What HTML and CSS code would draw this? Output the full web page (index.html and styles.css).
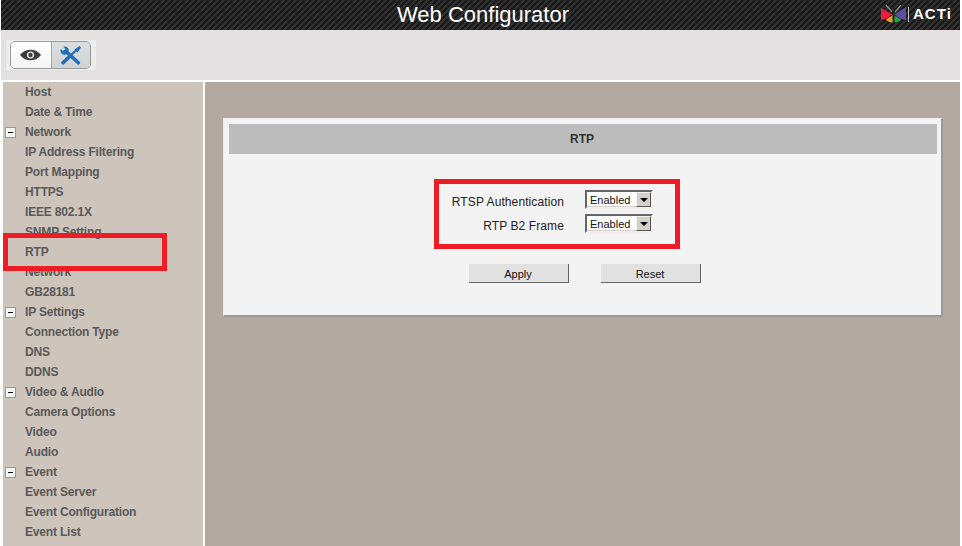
FILE: index.html
```html
<!DOCTYPE html>
<html lang="en">
<head>
<meta charset="utf-8">
<title>Web Configurator</title>
<link rel="stylesheet" href="styles.css">
</head>
<body>
<div class="page">
  <header class="topbar">
    <h1 class="title">Web Configurator</h1>
    <div class="logo">
      <svg class="logo-mark" width="25" height="18" viewBox="0 0 25 18">
        <path d="M5 0 L11 7 M20 0 L14 7" stroke="#8a8a8a" stroke-width="1.3" fill="none"/>
        <path d="M0 3 L11.5 9.5 L5 14 L0 15 Z" fill="#ee1c3a"/>
        <path d="M25 2 L13.5 9.5 L20 14 L25 15 Z" fill="#5b4ea3"/>
        <path d="M5 14.5 L11.5 10.5 L11.5 17.5 Q7 17.5 5 14.5 Z" fill="#f39a1f"/>
        <path d="M20 14.5 L13.5 10.5 L13.5 17.5 Q18 17.5 20 14.5 Z" fill="#1fa04a"/>
      </svg>
      <span class="logo-sep"></span>
      <span class="logo-text">ACTi</span>
    </div>
  </header>
  <div class="toolbar">
    <div class="switch-wrap">
      <div class="switch">
        <button class="switch-btn" type="button" aria-label="View">
          <svg width="21" height="12" viewBox="0 0 21 12">
            <path d="M0 6 C5 -1 16 -1 21 6 C16 13 5 13 0 6 Z" fill="#3c3c3c"/>
            <circle cx="10.5" cy="6" r="3.6" fill="#e8e8e8"/>
            <circle cx="10.5" cy="6" r="2.2" fill="#3c3c3c"/>
          </svg>
        </button>
        <button class="switch-btn is-active" type="button" aria-label="Settings">
          <svg width="21" height="19" viewBox="0 0 21 19">
            <path d="M5 4.5 L18.3 16.8" stroke="#1e6fbd" stroke-width="3.6" stroke-linecap="round" fill="none"/>
            <circle cx="4.6" cy="4.6" r="4.2" fill="#1e6fbd"/>
            <path d="M2.6 -.5 L5.4 3 L3.2 5 L-.5 2.2 L-.5 -.5 Z" fill="#d8dadc"/>
            <path d="M17.5 3 L8 12" stroke="#1e6fbd" stroke-width="2.4" fill="none"/>
            <path d="M8.6 11.5 L3 16.8" stroke="#1e6fbd" stroke-width="3.6" stroke-linecap="round" fill="none"/>
            <path d="M14.5 3.5 L19.5 0 L21 1.5 L17.5 6.5 Z" fill="#1e6fbd"/>
          </svg>
        </button>
      </div>
    </div>
  </div>
  <div class="content">
    <nav class="sidebar">
      <div class="nav-item">Host</div>
      <div class="nav-item">Date &amp; Time</div>
      <div class="nav-item has-toggle"><span class="toggle"></span>Network</div>
      <div class="nav-item">IP Address Filtering</div>
      <div class="nav-item">Port Mapping</div>
      <div class="nav-item">HTTPS</div>
      <div class="nav-item">IEEE 802.1X</div>
      <div class="nav-item">SNMP Setting</div>
      <div class="nav-item">RTP</div>
      <div class="nav-item">Network</div>
      <div class="nav-item">GB28181</div>
      <div class="nav-item has-toggle"><span class="toggle"></span>IP Settings</div>
      <div class="nav-item">Connection Type</div>
      <div class="nav-item">DNS</div>
      <div class="nav-item">DDNS</div>
      <div class="nav-item has-toggle"><span class="toggle"></span>Video &amp; Audio</div>
      <div class="nav-item">Camera Options</div>
      <div class="nav-item">Video</div>
      <div class="nav-item">Audio</div>
      <div class="nav-item has-toggle"><span class="toggle"></span>Event</div>
      <div class="nav-item">Event Server</div>
      <div class="nav-item">Event Configuration</div>
      <div class="nav-item">Event List</div>
      <div class="nav-highlight"></div>
    </nav>
    <main class="main">
      <section class="panel">
        <h2 class="panel-head">RTP</h2>
        <div class="form">
          <div class="fields">
            <div class="field">
              <span class="field-label">RTSP Authentication</span>
              <span class="select"><span class="select-value">Enabled</span><span class="select-arrow"></span></span>
            </div>
            <div class="field">
              <span class="field-label">RTP B2 Frame</span>
              <span class="select"><span class="select-value">Enabled</span><span class="select-arrow"></span></span>
            </div>
          </div>
          <div class="actions">
            <button class="action" type="button">Apply</button>
            <button class="action" type="button">Reset</button>
          </div>
        </div>
      </section>
    </main>
  </div>
</div>
</body>
</html>
```
FILE: styles.css
```css
* { box-sizing: border-box; }
html, body { margin: 0; height: 100%; background: #fff; overflow: hidden; }
body { font-family: "Liberation Sans", Arial, sans-serif; }
.page { width: 959px; height: 546px; margin-left: 1px; display: flex; flex-direction: column; }

.topbar {
  height: 30px; flex: none; display: flex; align-items: center; justify-content: center; position: relative;
  background-color: #1c1c1c;
  background-image: linear-gradient(135deg, #303030 17%, #191919 17% 50%, #303030 50% 67%, #191919 67%);
  background-size: 6px 6px;
}
.title { margin: 0 0 0 5px; color: #fff; font-size: 22px; font-weight: 400; line-height: 24px; }
.logo { position: absolute; right: 8px; top: 5px; height: 18px; display: flex; align-items: center; }
.logo-mark { display: block; }
.logo-sep { width: 1px; height: 15px; background: #c4c4c4; margin: 0 4px 0 2px; }
.logo-text { color: #fff; font-weight: 700; font-size: 15px; letter-spacing: 1.1px; line-height: 18px; }

.toolbar { height: 50px; flex: none; background: #e2e0e1; padding: 10px 0 0 5px; }
.switch-wrap { width: 90px; height: 30px; background: #eeedee; padding: 1px 0 0 4px; }
.switch { width: 81px; height: 28px; display: flex; border: 1px solid #9a9a9a; border-radius: 5px; overflow: hidden; }
.switch-btn { width: 40px; height: 100%; padding: 0; border: 0; background: linear-gradient(#fff, #f4f4f4); display: flex; align-items: center; justify-content: center; }
.switch-btn.is-active { background: linear-gradient(#dcdee0, #d0d2d4); border-left: 1px solid #a5a5a5; }

.content { flex: 1; margin-top: 2px; display: flex; min-height: 0; }
.sidebar { width: 200px; margin-left: 2px; background: #cdc4bb; position: relative; flex: none; overflow: hidden; }
.nav-item { height: 20px; line-height: 21px; padding-left: 22px; font-size: 12px; font-weight: 700; letter-spacing: -.18px; color: #595959; position: relative; white-space: nowrap; }
.toggle { position: absolute; left: 2px; top: 5px; width: 11px; height: 11px; border: 1px solid #999; background: #f4f4f4; }
.toggle::after { content: ""; position: absolute; left: 2px; top: 4px; width: 5px; height: 1px; background: #000; }
.nav-highlight { position: absolute; left: 0; top: 151px; width: 164px; height: 38px; border: 5px solid #ee1c25; }

.main { flex: 1; margin-left: 2px; background: #b3a9a2; padding: 36px 17px 0 18px; min-width: 0; }
.panel { height: 199px; background: #f3f3f3; border: 1px solid #e9ebef; border-bottom: 2px solid #9b9895; border-right: 2px solid #9b9895; padding: 5px 4px 5px 5px; }
.panel-head { margin: 0; height: 30px; padding-right: 2px; background: #bcbcbc; color: #333; font-size: 12px; font-weight: 700; line-height: 30px; text-align: center; }
.form { display: flex; flex-direction: column; align-items: center; padding-top: 25px; }
.fields { width: 246px; height: 70px; border: 5px solid #ee1c25; padding: 6px 0 0 0; margin-left: -52px; display: flex; flex-direction: column; gap: 5px; }
.field { display: flex; align-items: center; justify-content: flex-end; width: 214px; height: 19px; gap: 21px; }
.field-label { font-size: 12px; color: #222; letter-spacing: .1px; white-space: nowrap; padding-top: 5px; }
.select { width: 68px; height: 19px; flex: none; display: flex; align-items: center; background: #fff; border: 2px solid; border-color: #666 #f2f0ea #f2f0ea #666; box-shadow: inset -1px -1px 0 #d4d0c8; }
.select-value { flex: 1; font-size: 11px; color: #111; padding-left: 3px; }
.select-arrow { width: 15px; height: 15px; background: #d4d0c8; border: 1px solid; border-color: #f4f2ee #555 #555 #f4f2ee; position: relative; }
.select-arrow::after { content: ""; position: absolute; left: 3px; top: 5px; border: 4px solid transparent; border-top: 4px solid #000; border-bottom: 0; }
.actions { display: flex; gap: 32px; margin: 15px 0 0 4px; }
.action { width: 100px; height: 19px; padding: 1px 1px 0 0; background: #e1e1e1; border: 0; border-right: 1px solid #666; border-bottom: 1px solid #666; font: 11px "Liberation Sans", Arial, sans-serif; color: #111; }
```
